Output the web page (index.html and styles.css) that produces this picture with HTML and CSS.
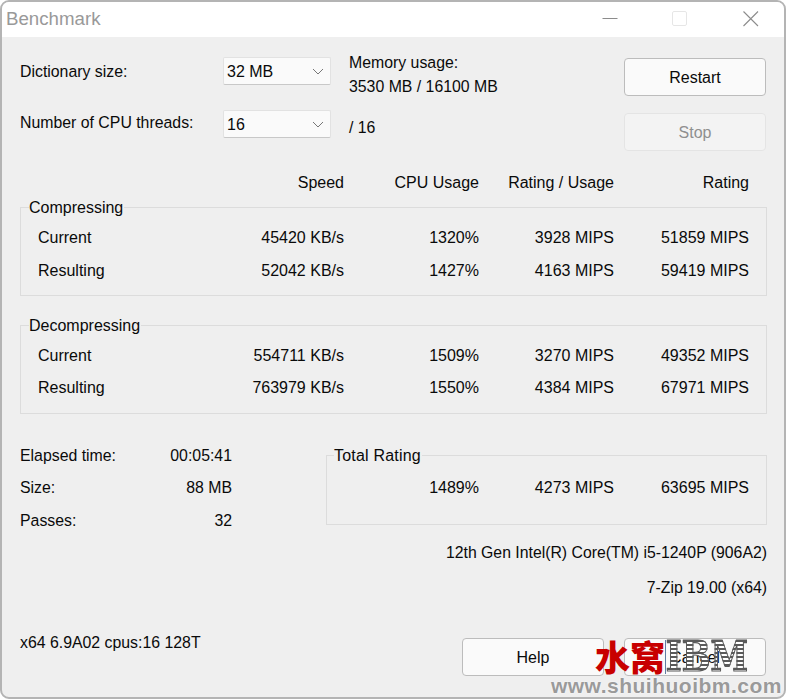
FILE: index.html
```html
<!DOCTYPE html>
<html lang="en">
<head>
<meta charset="utf-8">
<title>Benchmark</title>
<link rel="stylesheet" href="styles.css">
</head>
<body>
<div class="window">
  <header class="titlebar">
    <span class="title">Benchmark</span>
    <div class="controls">
      <svg class="ctl min" width="16" height="16" viewBox="0 0 16 16"><path d="M0.5 7.5H15.5" stroke="#8c8c8c" fill="none"/></svg>
      <svg class="ctl" width="16" height="16" viewBox="0 0 16 16"><rect x="0.5" y="0.5" width="14" height="14" rx="1.5" fill="#fff" stroke="#e6e6e6"/></svg>
      <svg class="ctl" width="16" height="16" viewBox="0 0 16 16"><path d="M0.5 0.5L15 15M15 0.5L0.5 15" stroke="#8c8c8c" stroke-width="1.1" fill="none"/></svg>
    </div>
  </header>
  <main class="content">
    <section class="settings">
      <div class="labels">
        <div>Dictionary size:</div>
        <div>Number of CPU threads:</div>
      </div>
      <div class="selects">
        <div class="select"><span>32 MB</span><svg width="12" height="7" viewBox="0 0 12 7"><path d="M1 1l5 5 5-5" stroke="#777" fill="none"/></svg></div>
        <div class="select"><span>16</span><svg width="12" height="7" viewBox="0 0 12 7"><path d="M1 1l5 5 5-5" stroke="#777" fill="none"/></svg></div>
      </div>
      <div class="memory">
        <div>Memory usage:</div>
        <div class="mem-val">3530 MB / 16100 MB</div>
        <div class="thr">/ 16</div>
      </div>
      <div class="actions">
        <button class="btn">Restart</button>
        <button class="btn disabled">Stop</button>
      </div>
    </section>

    <div class="row head"><span></span><span>Speed</span><span>CPU Usage</span><span>Rating / Usage</span><span>Rating</span></div>

    <fieldset class="group">
      <legend>Compressing</legend>
      <div class="row"><span>Current</span><span>45420 KB/s</span><span>1320%</span><span>3928 MIPS</span><span>51859 MIPS</span></div>
      <div class="row"><span>Resulting</span><span>52042 KB/s</span><span>1427%</span><span>4163 MIPS</span><span>59419 MIPS</span></div>
    </fieldset>

    <fieldset class="group second">
      <legend>Decompressing</legend>
      <div class="row"><span>Current</span><span>554711 KB/s</span><span>1509%</span><span>3270 MIPS</span><span>49352 MIPS</span></div>
      <div class="row"><span>Resulting</span><span>763979 KB/s</span><span>1550%</span><span>4384 MIPS</span><span>67971 MIPS</span></div>
    </fieldset>

    <section class="summary">
      <div class="stats">
        <div class="stat"><span>Elapsed time:</span><span>00:05:41</span></div>
        <div class="stat"><span>Size:</span><span>88 MB</span></div>
        <div class="stat"><span>Passes:</span><span>32</span></div>
      </div>
      <fieldset class="group total">
        <legend>Total Rating</legend>
        <div class="total-row"><span>1489%</span><span>4273 MIPS</span><span>63695 MIPS</span></div>
      </fieldset>
    </section>

    <div class="info">12th Gen Intel(R) Core(TM) i5-1240P (906A2)</div>
    <div class="info second-info">7-Zip 19.00 (x64)</div>

    <footer class="footer">
      <span class="sys">x64 6.9A02 cpus:16 128T</span>
      <div class="foot-btns">
        <button class="btn">Help</button>
        <button class="btn">Cancel</button>
      </div>
    </footer>
  </main>
  <div class="wm-logo"><span class="wm-cn">水窝</span><span class="wm-ibm">IBM</span></div>
  <div class="wm-url">www.shuihuoibm.com</div>
</div>
</body>
</html>
```
FILE: styles.css
```css
* { box-sizing: border-box; }
html, body { margin: 0; padding: 0; }
body { width: 786px; height: 699px; background: #fff; font: 15.85px/18px "Liberation Sans", Arial, sans-serif; color: #0a0a0a; overflow: hidden; }
.window { position: relative; width: 786px; height: 699px; background: #efefef; border: 2px solid #b4b4b4; border-radius: 9px; overflow: hidden; }
.titlebar { height: 35px; background: #fff; display: flex; justify-content: space-between; align-items: center; padding: 0 25px 2px 4px; }
.title { font-size: 18.7px; color: #999; }
.controls { display: flex; gap: 55px; align-items: center; margin-top: 1px; }
.min { margin-right: -1px; }
.content { padding: 0 17px 0 18px; }
.settings { display: flex; padding-top: 20px; height: 132px; }
.labels { width: 203px; }
.labels div:first-child { margin-top: 6px; }
.labels div + div { margin-top: 33px; }
.selects { width: 126px; display: flex; flex-direction: column; gap: 25px; }
.select { width: 108px; height: 28px; background: #fafafa; border: 1px solid #e2e2e2; border-bottom-color: #c8c8c8; border-radius: 2px; display: flex; justify-content: space-between; align-items: center; padding: 1px 6px 0 3px; font-size: 16px; }
.memory { width: 275px; margin-top: -3px; }
.mem-val { margin-top: 6px; }
.thr { margin-top: 23px; }
.actions { display: flex; flex-direction: column; gap: 17px; margin-top: 1px; }
.btn { width: 142px; height: 38px; font: 16px/18px "Liberation Sans", Arial, sans-serif; color: #0a0a0a; background: #fafafa; border: 1px solid #bcbcbc; border-radius: 4px; padding: 1px 0 0; }
.btn.disabled { background: #f3f3f3; border-color: #e4e4e4; color: #8f8f8f; }
.row { display: grid; grid-template-columns: 136px 170px 135px 135px 135px; height: 33px; align-items: center; font-size: 16px; }
.row span:not(:first-child) { text-align: right; }
.row.head { padding-left: 18px; height: 27px; }
.group { margin: 2px 0 0; min-width: 0; border: 1px solid #dcdcdc; padding: 0 0 0 17px; height: 98px; }
.group legend { padding: 0 1px 0 0; margin-left: -9px; line-height: 18px; position: relative; top: 1px; font-size: 16px; }
.group .row:first-of-type { margin-top: 5px; }
.second { margin-top: 20px; }
.group.second .row:first-of-type { margin-top: 6px; height: 32px; }
.second .row { height: 32.5px; }
.summary { display: flex; margin-top: 25px; height: 85px; }
.stats { width: 212px; margin-right: 94px; padding-top: 0.5px; }
.stat { display: flex; justify-content: space-between; height: 32.5px; align-items: center; }
.total { width: 441px; height: 79px; margin-top: 7px; padding: 0; }
.group.total legend { margin-left: 7px; letter-spacing: 0.2px; }
.total-row { display: grid; grid-template-columns: 152px 135px 135px; margin-top: 15px; font-size: 16px; }
.total-row span { text-align: right; }
.info { text-align: right; font-size: 15.8px; }
.summary + .info { margin-top: 20px; }
.second-info { margin-top: 17px; }
.footer { display: flex; justify-content: space-between; margin-top: 37px; }
.foot-btns { display: flex; gap: 20px; margin: 4px 1px 0 0; }
.wm-logo { position: absolute; left: 593px; top: 634px; display: flex; align-items: center; height: 40px; }
.wm-cn { font: 900 35px/40px "Noto Sans CJK SC", sans-serif; color: #c80000; }
.wm-ibm { display: inline-block; width: 102px; margin-top: 2px; border-left: 1px solid #3c5f8f; font: 700 42px/34px "DejaVu Serif", serif; color: transparent; -webkit-text-stroke: 1.2px #5a5a5a; background: repeating-linear-gradient(#5a5a5a 0 2px, #fff 2px 4px); -webkit-background-clip: text; background-clip: text; transform: scaleX(0.81); transform-origin: left center; }
.wm-url { position: absolute; right: 2px; top: 672px; font: 700 21px/24px "Liberation Sans", sans-serif; color: #9a9a9a; letter-spacing: 0.5px; text-shadow: 0 0 2px #fff; }
```
